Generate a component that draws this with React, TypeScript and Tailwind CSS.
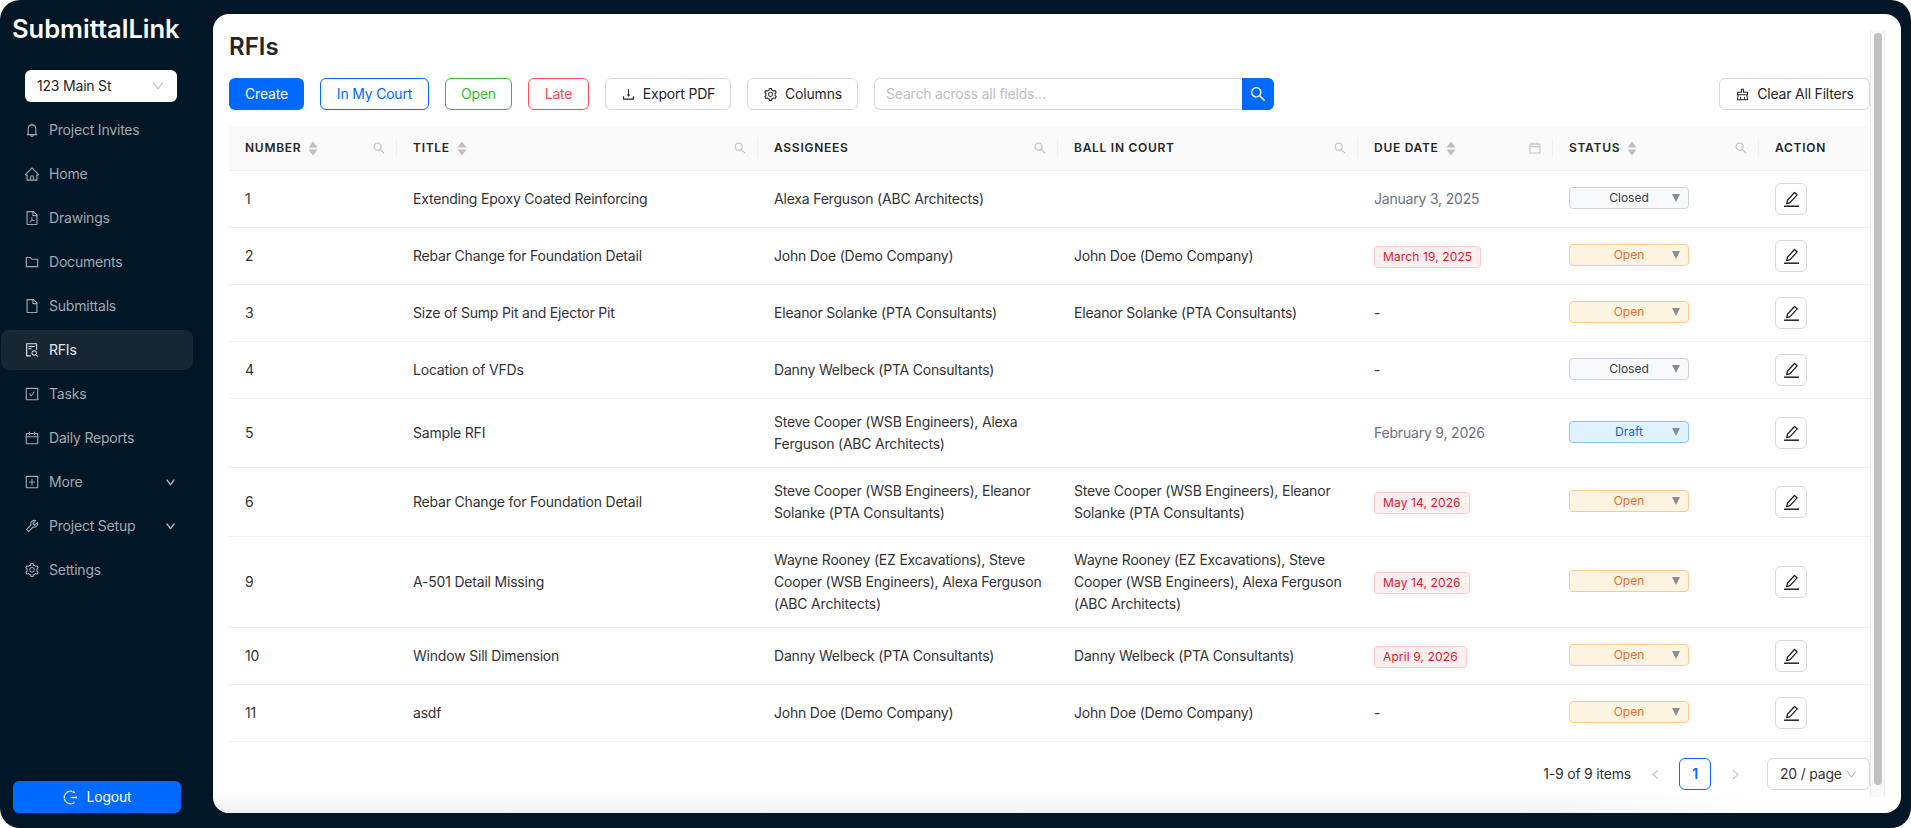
import type { ReactNode } from "react";
import {
  AiOutlineBell,
  AiOutlineCalendar,
  AiOutlineCheckSquare,
  AiOutlineClear,
  AiOutlineDown,
  AiOutlineDownload,
  AiOutlineFile,
  AiOutlineFilePdf,
  AiOutlineFileSearch,
  AiOutlineFolder,
  AiOutlineHome,
  AiOutlineLeft,
  AiOutlinePlusSquare,
  AiOutlineRight,
  AiOutlineSearch,
  AiOutlineSetting,
  AiOutlineTool,
} from "react-icons/ai";

const menu = [
  { label: "Project Invites", icon: <AiOutlineBell /> },
  { label: "Home", icon: <AiOutlineHome /> },
  { label: "Drawings", icon: <AiOutlineFilePdf /> },
  { label: "Documents", icon: <AiOutlineFolder /> },
  { label: "Submittals", icon: <AiOutlineFile /> },
  { label: "RFIs", icon: <AiOutlineFileSearch />, active: true },
  { label: "Tasks", icon: <AiOutlineCheckSquare /> },
  { label: "Daily Reports", icon: <AiOutlineCalendar /> },
  { label: "More", icon: <AiOutlinePlusSquare />, caret: true },
  { label: "Project Setup", icon: <AiOutlineTool />, caret: true },
  { label: "Settings", icon: <AiOutlineSetting /> },
];

type Row = {
  num: string;
  title: string;
  assignees: string;
  court: string;
  due: string;
  late?: boolean;
  status: "Open" | "Closed" | "Draft";
};

const rows: Row[] = [
  { num: "1", title: "Extending Epoxy Coated Reinforcing", assignees: "Alexa Ferguson (ABC Architects)", court: "", due: "January 3, 2025", status: "Closed" },
  { num: "2", title: "Rebar Change for Foundation Detail", assignees: "John Doe (Demo Company)", court: "John Doe (Demo Company)", due: "March 19, 2025", late: true, status: "Open" },
  { num: "3", title: "Size of Sump Pit and Ejector Pit", assignees: "Eleanor Solanke (PTA Consultants)", court: "Eleanor Solanke (PTA Consultants)", due: "-", status: "Open" },
  { num: "4", title: "Location of VFDs", assignees: "Danny Welbeck (PTA Consultants)", court: "", due: "-", status: "Closed" },
  { num: "5", title: "Sample RFI", assignees: "Steve Cooper (WSB Engineers), Alexa Ferguson (ABC Architects)", court: "", due: "February 9, 2026", status: "Draft" },
  { num: "6", title: "Rebar Change for Foundation Detail", assignees: "Steve Cooper (WSB Engineers), Eleanor Solanke (PTA Consultants)", court: "Steve Cooper (WSB Engineers), Eleanor Solanke (PTA Consultants)", due: "May 14, 2026", late: true, status: "Open" },
  { num: "9", title: "A-501 Detail Missing", assignees: "Wayne Rooney (EZ Excavations), Steve Cooper (WSB Engineers), Alexa Ferguson (ABC Architects)", court: "Wayne Rooney (EZ Excavations), Steve Cooper (WSB Engineers), Alexa Ferguson (ABC Architects)", due: "May 14, 2026", late: true, status: "Open" },
  { num: "10", title: "Window Sill Dimension", assignees: "Danny Welbeck (PTA Consultants)", court: "Danny Welbeck (PTA Consultants)", due: "April 9, 2026", late: true, status: "Open" },
  { num: "11", title: "asdf", assignees: "John Doe (Demo Company)", court: "John Doe (Demo Company)", due: "-", status: "Open" },
];

const statusStyles = {
  Open: "bg-[#fff4e2] border-[#ffcb8a] text-[#e8702a]",
  Closed: "bg-[#f8f9fa] border-[#ced4da] text-[#343a40]",
  Draft: "bg-[#e0f1ff] border-[#8cc4f8] text-[#1c64d8]",
};

function SortIcon() {
  return (
    <svg width="10" height="15" viewBox="0 0 10 15" className="ml-[7px] shrink-0 fill-[#bfbfbf]">
      <path d="M5 0.5 L9.5 6.5 H0.5 Z" />
      <path d="M0.5 8.5 H9.5 L5 14.5 Z" />
    </svg>
  );
}

function PencilIcon() {
  return (
    <svg width="17" height="17" viewBox="0 0 16 16" fill="none" stroke="#1f1f1f" strokeWidth="1.2" strokeLinejoin="round">
      <path d="M10.8 1.4 L13.3 3.6 L6.6 11 L3.5 11.9 L4.2 8.7 Z" />
      <path d="M1 14.3 H15" strokeWidth="1.4" />
    </svg>
  );
}

function LogoutIcon() {
  return (
    <svg width="15" height="15" viewBox="0 0 15 15" fill="none" stroke="white" strokeWidth="1.3">
      <path d="M11.8 2.8 A6.3 6.3 0 1 0 11.8 12.2" strokeDasharray="2.6 0.5" />
      <path d="M7.5 7.5 H14" />
      <circle cx="13.2" cy="7.5" r="0.9" fill="white" stroke="none" />
    </svg>
  );
}

function HeadCell({
  label,
  sort = true,
  filter,
  last,
}: {
  label: string;
  sort?: boolean;
  filter?: ReactNode;
  last?: boolean;
}) {
  return (
    <th className="p-0 h-[45px] border-b border-[#f0f0f0] bg-[#fafafa] font-normal">
      <div className={`flex items-center h-[20px] pl-4 pr-[10px] ${last ? "" : "border-r border-[#f0f0f0]"}`}>
        <span className="text-[12px] font-semibold tracking-[0.06em] text-[#262626]">{label}</span>
        {sort && <SortIcon />}
        {filter && <span className="ml-auto text-[14px] text-[#bfbfbf]">{filter}</span>}
      </div>
    </th>
  );
}

function OutlineButton({ icon, width, children }: { icon: ReactNode; width: string; children: ReactNode }) {
  return (
    <button className={`flex items-center justify-center gap-[7px] h-8 ${width} bg-white rounded-md border border-[#d9d9d9] text-sm text-[#262626]`}>
      <span className="text-[15px]">{icon}</span>
      {children}
    </button>
  );
}

export default function App() {
  return (
    <div className="h-[828px] w-full bg-white font-['Inter',sans-serif] tracking-[-0.2px] overflow-hidden">
      <div className="flex h-full bg-[#011627] rounded-[20px]">
        {/* Sidebar */}
        <aside className="w-[213px] shrink-0 flex flex-col">
          <div className="h-[70px] pl-[12px] pt-[13px]">
            <span className="text-[25.5px] leading-[32px] font-semibold tracking-normal text-white">SubmittalLink</span>
          </div>

          <div className="mx-[25px] w-[152px] h-8 bg-white rounded-md flex items-center pl-3 pr-3 text-sm text-[#262626]">
            123 Main St
            <AiOutlineDown className="ml-auto text-[14px] text-[#bfbfbf]" />
          </div>

          <nav className="mt-2 flex flex-col gap-1 ml-[1px] w-[192px]">
            {menu.map((m) => (
              <div
                key={m.label}
                className={`h-[40px] flex items-center pl-[23px] pr-[17px] rounded-lg text-sm ${
                  m.active ? "bg-[#172633] text-[#e6e8ea]" : "text-[#a3a9af]"
                }`}
              >
                <span className="w-[16px] text-[16px] mr-[9px] flex justify-center">{m.icon}</span>
                {m.label}
                {m.caret && <AiOutlineDown className="ml-auto text-[11px] text-[#c7cbcf] stroke-[40]" />}
              </div>
            ))}
          </nav>

          <button className="mt-auto mb-[15px] mx-[13px] w-[168px] h-8 rounded-md bg-[#0069ff] text-white text-sm flex items-center justify-center gap-[9px]">
            <LogoutIcon />
            Logout
          </button>
        </aside>

        {/* Main card */}
        <main className="relative flex-1 mt-[14px] mb-[15px] mr-[10px] bg-white rounded-2xl p-4 flex overflow-hidden">
          <div className="flex-1 min-w-0">
            <h1 className="text-[24px] leading-[34px] font-semibold tracking-normal text-[#262626]">RFIs</h1>

            <div className="mt-[14px] flex items-center gap-4">
              <button className="h-8 w-[75px] rounded-md bg-[#0069ff] text-white text-sm">Create</button>
              <button className="h-8 w-[109px] rounded-md bg-white border border-[#0069ff] text-[#0069ff] text-sm">In My Court</button>
              <button className="h-8 w-[67px] rounded-md bg-white border border-[#2fbf2f] text-[#2fbf2f] text-sm">Open</button>
              <button className="h-8 w-[61px] rounded-md bg-white border border-[#ff4d4f] text-[#ff4d4f] text-sm">Late</button>
              <OutlineButton icon={<AiOutlineDownload />} width="w-[126px]">Export PDF</OutlineButton>
              <OutlineButton icon={<AiOutlineSetting />} width="w-[111px]">Columns</OutlineButton>
              <div className="flex h-8 w-[400px]">
                <div className="flex-1 flex items-center px-[11px] border border-r-0 border-[#d9d9d9] rounded-l-md text-sm text-[#bfbfbf]">
                  Search across all fields...
                </div>
                <button className="w-8 flex items-center justify-center bg-[#0069ff] rounded-r-md text-white text-[18px]">
                  <AiOutlineSearch />
                </button>
              </div>
              <div className="ml-auto">
                <OutlineButton icon={<AiOutlineClear />} width="w-[151px]">Clear All Filters</OutlineButton>
              </div>
            </div>

            <table className="mt-4 w-full table-fixed border-separate border-spacing-0 text-sm text-[#333333]">
              <colgroup>
                <col className="w-[168px]" />
                <col className="w-[361px]" />
                <col className="w-[300px]" />
                <col className="w-[300px]" />
                <col className="w-[195px]" />
                <col className="w-[206px]" />
                <col className="w-[111px]" />
              </colgroup>
              <thead>
                <tr className="text-left">
                  <HeadCell label="NUMBER" filter={<AiOutlineSearch />} />
                  <HeadCell label="TITLE" filter={<AiOutlineSearch />} />
                  <HeadCell label="ASSIGNEES" sort={false} filter={<AiOutlineSearch />} />
                  <HeadCell label="BALL IN COURT" sort={false} filter={<AiOutlineSearch />} />
                  <HeadCell label="DUE DATE" filter={<AiOutlineCalendar />} />
                  <HeadCell label="STATUS" filter={<AiOutlineSearch />} />
                  <HeadCell label="ACTION" sort={false} last />
                </tr>
              </thead>
              <tbody>
                {rows.map((r) => (
                  <tr key={r.num}>
                    <td className="px-4 py-3 leading-[22px] border-b border-[#f0f0f0]">{r.num}</td>
                    <td className="px-4 py-3 leading-[22px] border-b border-[#f0f0f0]">{r.title}</td>
                    <td className="px-4 py-3 leading-[22px] border-b border-[#f0f0f0]">{r.assignees}</td>
                    <td className="px-4 py-3 leading-[22px] border-b border-[#f0f0f0]">{r.court}</td>
                    <td className="px-4 py-3 leading-[22px] border-b border-[#f0f0f0]">
                      {r.late ? (
                        <span className="inline-block mt-[2px] h-[22px] px-2 rounded-[4px] border border-[#ffc9c9] bg-[#fff0f0] text-[12px] leading-[20px] tracking-[0.01em] text-[#e0182d] align-middle">
                          {r.due}
                        </span>
                      ) : (
                        <span className={r.due === "-" ? "" : "text-[#6b7280]"}>{r.due}</span>
                      )}
                    </td>
                    <td className="px-4 py-3 leading-[22px] border-b border-[#f0f0f0]">
                      <div
                        className={`relative w-[120px] h-[22px] mb-[3px] rounded-[4px] border text-[12px] leading-[20px] tracking-normal text-center ${statusStyles[r.status]}`}
                      >
                        {r.status}
                        <svg width="8" height="8" viewBox="0 0 8 8" className="absolute right-[8px] top-[6px] fill-[#868e96]">
                          <path d="M0 0 H8 L4 8 Z" />
                        </svg>
                      </div>
                    </td>
                    <td className="px-4 py-3 leading-[22px] border-b border-[#f0f0f0]">
                      <button className="w-8 h-8 flex items-center justify-center rounded-md border border-[#d9d9d9] bg-white">
                        <PencilIcon />
                      </button>
                    </td>
                  </tr>
                ))}
              </tbody>
            </table>

            <div className="mt-[16px] flex items-center justify-end text-sm text-[#333333]">
              <span className="mr-2">1-9 of 9 items</span>
              <span className="w-8 h-8 flex items-center justify-center text-[13px] text-[#bfbfbf]">
                <AiOutlineLeft />
              </span>
              <span className="ml-2 w-8 h-8 flex items-center justify-center rounded-md border border-[#0069ff] text-[#0069ff] font-semibold">
                1
              </span>
              <span className="ml-2 w-8 h-8 flex items-center justify-center text-[13px] text-[#bfbfbf]">
                <AiOutlineRight />
              </span>
              <div className="ml-4 w-[103px] h-8 flex items-center pl-3 pr-[11px] rounded-md border border-[#d9d9d9]">
                20 / page
                <AiOutlineDown className="ml-auto text-[13px] text-[#bfbfbf]" />
              </div>
            </div>
          </div>

          {/* Scrollbar */}
          <div className="w-[15px] shrink-0 bg-[#fafafa] border-x border-[#ececec] pt-[3px] pb-[12px] flex justify-center">
            <div className="w-[8px] h-full rounded-full bg-[#c1c1c1]" />
          </div>

          <div className="absolute inset-x-0 bottom-0 h-[22px] pointer-events-none bg-gradient-to-b from-transparent to-[#f2f2f2] [mask-image:linear-gradient(to_right,black_80%,transparent_92%)]" />
        </main>
      </div>
    </div>
  );
}
